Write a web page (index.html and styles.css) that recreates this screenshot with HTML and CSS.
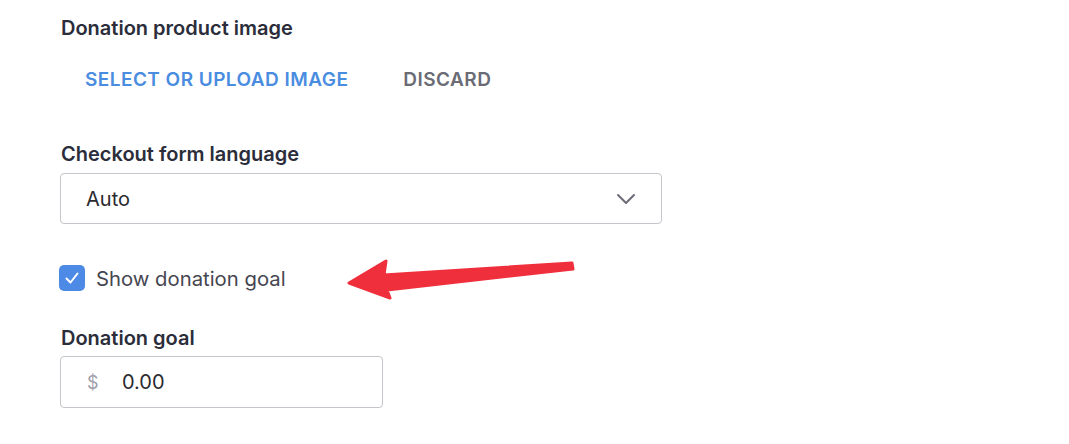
FILE: index.html
```html
<!DOCTYPE html>
<html>
  <head>
    <title>Donation settings</title>
    <link rel="stylesheet" href="styles.css">
  </head>
  <body>
    <div class="settings">
      <div class="field">
        <label class="field-label">Donation product image</label>
        <div class="image-actions">
          <button type="button" class="text-btn text-btn-primary">Select or upload image</button>
          <button type="button" class="text-btn text-btn-muted">Discard</button>
        </div>
      </div>

      <div class="field field-language">
        <label class="field-label" for="language">Checkout form language</label>
        <div class="select-box">
          <span class="select-value">Auto</span>
          <svg class="chevron" width="20" height="12" viewBox="0 0 20 12">
            <path d="M2 2 L10 10 L18 2" fill="none" stroke="#6c6c78" stroke-width="2" stroke-linecap="round" stroke-linejoin="round"/>
          </svg>
        </div>
      </div>

      <div class="check-row">
        <span class="checkbox">
          <svg width="18" height="18" viewBox="0 0 18 18">
            <path d="M3.5 9.5 L7.5 13.5 L14.5 4.5" fill="none" stroke="#fff" stroke-width="2" stroke-linecap="round" stroke-linejoin="round"/>
          </svg>
        </span>
        <span class="check-label">Show donation goal</span>
      </div>

      <div class="field field-goal">
        <label class="field-label" for="goal">Donation goal</label>
        <div class="money-input">
          <span class="currency">$</span>
          <span class="money-value">0.00</span>
        </div>
      </div>
    </div>

    <!-- annotation arrow -->
    <svg class="arrow" width="1069" height="444" viewBox="0 0 1069 444">
      <polygon points="349,283 386,261 384,275 572,263 573,269 387,290 390,298" fill="#ef2f3b" stroke="#ef2f3b" stroke-width="3" stroke-linejoin="round"/>
    </svg>
  </body>
</html>
```

FILE: styles.css
```css
body {
  margin: 0;
  background-color: #fff;
  font-family: Inter, "Noto Sans", sans-serif;
  color: #2b2d3b;
}

.settings {
  padding: 16px 0 0 60px;
}

.field-label {
  display: block;
  font-size: 20px;
  font-weight: 600;
  line-height: 24px;
  padding-left: 1px;
}

.image-actions {
  display: flex;
  gap: 31px;
  margin-top: 20px;
}

.text-btn {
  background: none;
  border: none;
  padding: 8px 12px;
  font-family: Inter, "Noto Sans", sans-serif;
  font-size: 19px;
  font-weight: 600;
  line-height: 24px;
  text-transform: uppercase;
  letter-spacing: 0.45px;
  cursor: pointer;
}

.text-btn-primary {
  color: #4a8de0;
  margin-left: 13px;
}

.text-btn-muted {
  color: #6a6b74;
}

.field-language {
  margin-top: 42px;
}

.select-box {
  display: flex;
  align-items: center;
  justify-content: space-between;
  width: 600px;
  height: 49px;
  margin-top: 7px;
  border: 1px solid #c5c5cb;
  border-radius: 4px;
}

.select-value {
  font-size: 20px;
  padding-left: 25px;
  color: #2a2a30;
}

.chevron {
  margin-right: 25px;
}

.check-row {
  display: flex;
  align-items: center;
  gap: 11px;
  margin-top: 41px;
}

.checkbox {
  display: flex;
  align-items: center;
  justify-content: center;
  width: 26px;
  height: 26px;
  margin-left: -1px;
  border-radius: 5px;
  background-color: #4d8ae6;
}

.check-label {
  font-size: 20.3px;
  color: #454650;
}

.field-goal {
  margin-top: 35px;
}

.money-input {
  display: flex;
  align-items: center;
  width: 321px;
  height: 50px;
  margin-top: 6px;
  border: 1px solid #c5c5cb;
  border-radius: 4px;
}

.currency {
  font-size: 18px;
  color: #a0a0ac;
  padding-left: 26px;
  width: 35px;
}

.money-value {
  font-size: 20px;
  color: #2a2a30;
}

.arrow {
  position: absolute;
  left: 0;
  top: 0;
  pointer-events: none;
}
```
